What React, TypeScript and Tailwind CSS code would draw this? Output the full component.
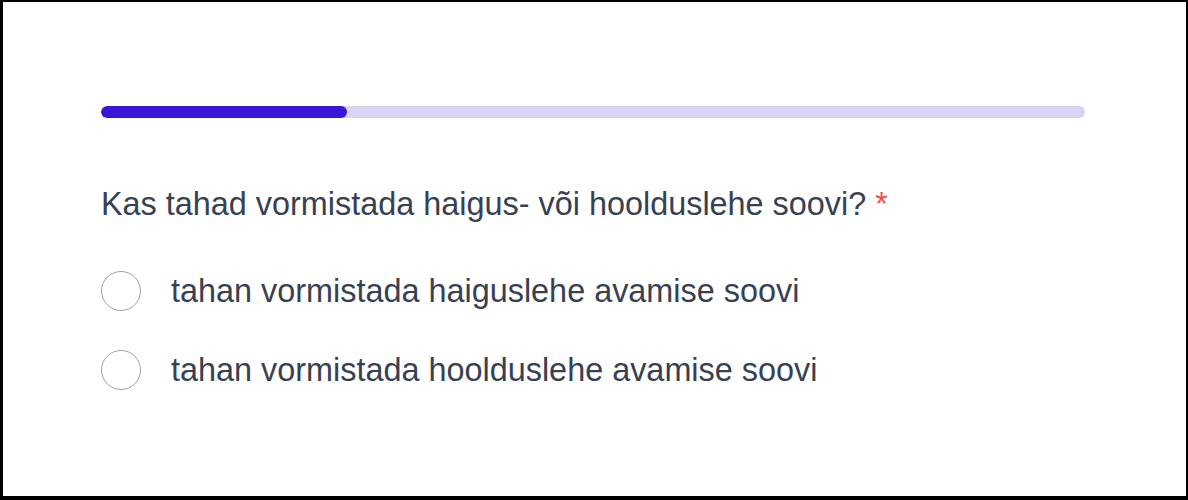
import { useState } from 'react';

const options = [
  'tahan vormistada haiguslehe avamise soovi',
  'tahan vormistada hoolduslehe avamise soovi',
];

function App() {
  const [selected, setSelected] = useState<number | null>(null);

  return (
    <div className="h-[500px] w-[1188px] border-t-2 border-r-2 border-b-4 border-l-[3px] border-black bg-white font-['Liberation_Sans',Arial,sans-serif] text-[#374151]">
      <div className="flex flex-col pl-[98px] pr-[101px] pt-[104px]">
        <div className="h-3 w-full overflow-hidden rounded-full bg-[#d9d3f6]">
          <div className="h-3 w-1/4 rounded-full bg-[#3a17d8]"></div>
        </div>

        <p className="mt-[66px] text-[32.4px] leading-10">
          Kas tahad vormistada haigus- või hoolduslehe soovi?{' '}
          <span className="text-[#f05252]">*</span>
        </p>

        <div className="mt-[47px] flex flex-col gap-[39px]">
          {options.map((label, i) => (
            <label key={label} className="flex cursor-pointer items-center gap-[30px]">
              <span
                onClick={() => setSelected(i)}
                className={`flex h-10 w-10 shrink-0 items-center justify-center rounded-full border ${
                  selected === i ? 'border-[#3a17d8]' : 'border-[#9ca3af]'
                }`}
              >
                {selected === i && <span className="h-4 w-4 rounded-full bg-[#3a17d8]"></span>}
              </span>
              <span className="text-[32.4px] leading-10">{label}</span>
            </label>
          ))}
        </div>
      </div>
    </div>
  );
}

export default App;
